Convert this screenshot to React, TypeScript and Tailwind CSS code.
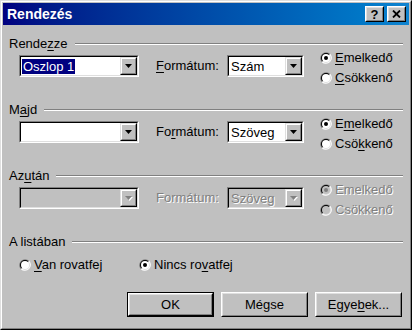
import type { ReactNode } from 'react';

const dis = "text-[#808080] [text-shadow:1px_1px_0_#ffffff]";

function U({ children }: { children: ReactNode }) {
  return <span className="underline decoration-1 underline-offset-[2px]">{children}</span>;
}

function Arrow({ disabled }: { disabled?: boolean }) {
  return (
    <svg width="9" height="6" viewBox="0 0 9 6">
      {disabled && <path d="M2 2h7L5.5 6z" fill="#ffffff" />}
      <path d="M1 1h7L4.5 5z" fill={disabled ? '#808080' : '#000000'} />
    </svg>
  );
}

function Combo({ width, value, selected, disabled }: { width: string; value?: string; selected?: boolean; disabled?: boolean }) {
  return (
    <div className={`${width} h-[22px] border border-t-[#808080] border-l-[#808080] border-b-white border-r-white`}>
      <div className={`h-full flex border border-t-black border-l-black border-b-[#dfdfdf] border-r-[#dfdfdf] ${disabled ? 'bg-[#c0c0c0]' : 'bg-white'}`}>
        <div className="flex-1 flex items-center pl-[1px] overflow-hidden">
          {value && (
            <span className={`px-[1px] leading-[15px] ${selected ? 'bg-[#000080] text-white' : ''} ${disabled ? dis : ''}`}>{value}</span>
          )}
        </div>
        <div className="w-[17px] h-full border border-t-[#dfdfdf] border-l-[#dfdfdf] border-b-black border-r-black">
          <div className="h-full flex items-center justify-center bg-[#c0c0c0] border border-t-white border-l-white border-b-[#808080] border-r-[#808080]">
            <Arrow disabled={disabled} />
          </div>
        </div>
      </div>
    </div>
  );
}

function Radio({ checked, disabled, children }: { checked?: boolean; disabled?: boolean; children: ReactNode }) {
  return (
    <div className="h-[14px] flex items-center gap-[3px]">
      <svg width="12" height="12" viewBox="0 0 12 12" className="shrink-0">
        <path d="M1.76 10.24A6 6 0 0 1 10.24 1.76Z" fill="#808080" />
        <path d="M10.24 1.76A6 6 0 0 1 1.76 10.24Z" fill="#ffffff" />
        <path d="M2.46 9.54A5 5 0 0 1 9.54 2.46Z" fill="#000000" />
        <path d="M9.54 2.46A5 5 0 0 1 2.46 9.54Z" fill="#dfdfdf" />
        <circle cx="6" cy="6" r="4" fill={disabled ? '#c0c0c0' : '#ffffff'} />
        {checked && <circle cx="6" cy="6" r="2" fill={disabled ? '#808080' : '#000000'} />}
      </svg>
      <span className={disabled ? dis : ''}>{children}</span>
    </div>
  );
}

function Header({ children, disabled }: { children: ReactNode; disabled?: boolean }) {
  return (
    <div className="h-4 flex items-center gap-[7px] pr-[4px]">
      <span className={disabled ? dis : ''}>{children}</span>
      <div className="flex-1 h-[2px] border-t border-t-[#808080] border-b border-b-white" />
    </div>
  );
}

function Button({ children, def }: { children: ReactNode; def?: boolean }) {
  return (
    <div className={`w-[87px] h-[25px] ${def ? 'border border-black' : ''}`}>
      <div className="h-full border border-t-white border-l-white border-b-black border-r-black">
        <div className="h-full flex items-center justify-center border border-t-[#dfdfdf] border-l-[#dfdfdf] border-b-[#808080] border-r-[#808080]">
          {children}
        </div>
      </div>
    </div>
  );
}

function SortGroup({
  title, combo, selected, format, asc, desc, formatLabel, disabled,
}: {
  title: ReactNode; combo?: string; selected?: boolean; format: string; asc: ReactNode; desc: ReactNode; formatLabel: ReactNode; disabled?: boolean;
}) {
  return (
    <div className="h-[66px]">
      <Header>{title}</Header>
      <div className="flex items-start pl-[10px] mt-[3px]">
        <Combo width="w-[120px]" value={combo} selected={selected} disabled={disabled} />
        <div className={`ml-[17px] w-[71px] h-[22px] flex items-center ${disabled ? dis : ''}`}>{formatLabel}</div>
        <Combo width="w-[77px]" value={format} disabled={disabled} />
        <div className="ml-[16px] -mt-[4px] flex flex-col gap-[6px]">
          <Radio checked disabled={disabled}>{asc}</Radio>
          <Radio disabled={disabled}>{desc}</Radio>
        </div>
      </div>
    </div>
  );
}

export default function App() {
  return (
    <div className="w-[412px] h-[330px] bg-[#c0c0c0] text-black text-[13px] font-['Liberation_Sans',Arial,sans-serif] border border-t-[#dfdfdf] border-l-[#dfdfdf] border-b-black border-r-black">
      <div className="h-full flex flex-col border border-t-white border-l-white border-b-[#808080] border-r-[#808080] p-[1px]">
        <div className="h-[22px] flex items-center justify-between bg-gradient-to-r from-[#000080] to-[#1084d0] pl-[4px] pr-[3px]">
          <span className="text-white font-bold text-[14px]">Rendezés</span>
          <div className="flex gap-[3px]">
            <div className="w-[19px] h-[16px] border border-t-white border-l-white border-b-black border-r-black">
              <div className="h-full flex items-center justify-center bg-[#c0c0c0] border border-t-[#dfdfdf] border-l-[#dfdfdf] border-b-[#808080] border-r-[#808080] font-bold text-[13px] leading-none">?</div>
            </div>
            <div className="w-[19px] h-[16px] border border-t-white border-l-white border-b-black border-r-black">
              <div className="h-full flex items-center justify-center bg-[#c0c0c0] border border-t-[#dfdfdf] border-l-[#dfdfdf] border-b-[#808080] border-r-[#808080]">
                <svg width="9" height="8" viewBox="0 0 9 8">
                  <path d="M1 0.5l7 7M8 0.5l-7 7" stroke="#000" strokeWidth="1.8" />
                </svg>
              </div>
            </div>
          </div>
        </div>

        <div className="flex flex-col pl-[6px] pr-[2px] pt-[11px]">
          <SortGroup
            title={<>Rende<U>z</U>ze</>}
            combo="Oszlop 1"
            selected
            formatLabel={<><U>F</U>ormátum:</>}
            format="Szám"
            asc={<><U>E</U>melkedő</>}
            desc={<><U>C</U>sökkenő</>}
          />
          <SortGroup
            title={<>M<U>a</U>jd</>}
            formatLabel={<>Fo<U>r</U>mátum:</>}
            format="Szöveg"
            asc={<>E<U>m</U>elkedő</>}
            desc={<>Csö<U>k</U>kenő</>}
          />
          <SortGroup
            title={<>Az<U>u</U>tán</>}
            disabled
            formatLabel="Formátum:"
            format="Szöveg"
            asc="Emelkedő"
            desc="Csökkenő"
          />
          <Header>A listában</Header>
          <div className="flex pl-[10px] mt-[8px]">
            <div className="w-[120px]">
              <Radio><U>V</U>an rovatfej</Radio>
            </div>
            <Radio checked>Nincs ro<U>v</U>atfej</Radio>
          </div>
          <div className="flex justify-end gap-[7px] mt-[20px] pr-[5px]">
            <Button def>OK</Button>
            <Button>Mégse</Button>
            <Button>Egye<U>b</U>ek...</Button>
          </div>
        </div>
      </div>
    </div>
  );
}
